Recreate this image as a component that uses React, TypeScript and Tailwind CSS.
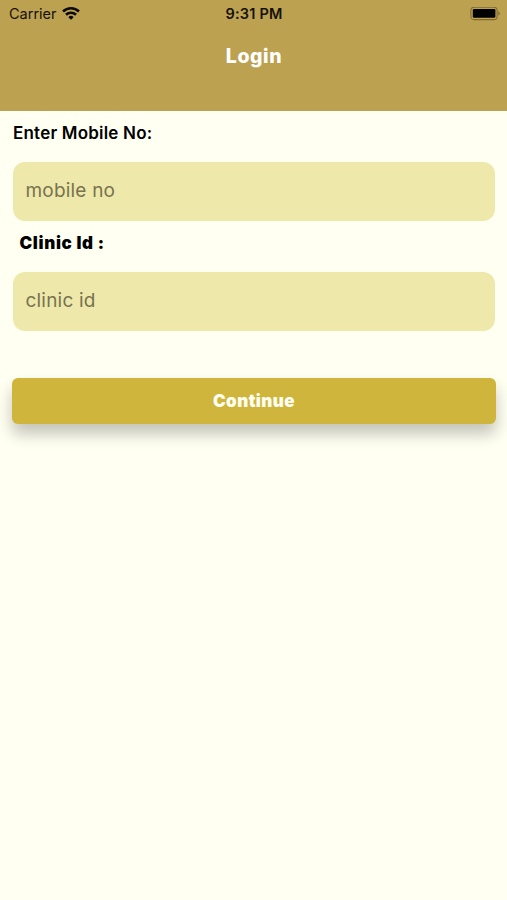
import React from "react";

function WifiIcon() {
  return (
    <svg className="ml-[5px] h-[14px] w-[18px]" viewBox="0 0 19 14" fill="none" stroke="#0c0a04" strokeWidth="2.7">
      <path d="M1.1 4.4a12 12 0 0 1 16.8 0" />
      <path d="M4.2 7.8a7.6 7.6 0 0 1 10.6 0" />
      <path d="M9.5 13.2 6.7 10.4a3.9 3.9 0 0 1 5.6 0z" fill="#0c0a04" stroke="none" />
    </svg>
  );
}

function BatteryIcon() {
  return (
    <svg className="h-[14px] w-[31px]" viewBox="0 0 31 14">
      <rect x="0.9" y="0.2" width="26.2" height="12.4" rx="3.2" fill="none" stroke="#806a31" strokeWidth="1.1" />
      <rect x="2.8" y="2" width="22.6" height="8.8" rx="1.3" fill="#000" />
      <path d="M28.3 4.2c1.9.6 1.9 3.8 0 4.4z" fill="#806a31" />
    </svg>
  );
}

function StatusBar() {
  return (
    <div className="grid h-[27px] grid-cols-[1fr_auto_1fr] items-center text-[14.5px] leading-[27px] text-[#15110a]">
      <div className="flex items-center pl-[9px]">
        <span>Carrier</span>
        <WifiIcon />
      </div>
      <span className="pl-[1px] font-semibold tracking-[0.2px]">9:31 PM</span>
      <div className="flex justify-end pr-[6px]">
        <BatteryIcon />
      </div>
    </div>
  );
}

function Field({ placeholder }: { placeholder: string }) {
  return (
    <input
      placeholder={placeholder}
      className="block h-[58.5px] w-full rounded-[12px] bg-[#eee8aa] px-[12.5px] pb-px text-[19px] tracking-[0.2px] text-black outline-none placeholder:text-[#77734f]"
    />
  );
}

export default function App() {
  return (
    <div className="flex h-[900px] w-full flex-col overflow-hidden bg-[#fffff2] font-['Inter',sans-serif]">
      <header className="h-[110.5px] bg-[#bca151]">
        <StatusBar />
        <h1 className="mt-[15px] pl-[1px] text-center text-[19.5px] font-extrabold leading-[28px] tracking-[0.6px] text-white">Login</h1>
      </header>
      <main className="pl-[13px] pr-[12px]">
        <div className="h-[51.5px] pt-[10.5px] text-[17px] font-semibold leading-[24px] tracking-[0.2px] text-black">Enter Mobile No:</div>
        <Field placeholder="mobile no" />
        <div className="h-[51.5px] pl-[6.5px] pt-[10.5px] text-[17px] font-black leading-[24px] tracking-[0.65px] text-black">Clinic Id :</div>
        <Field placeholder="clinic id" />
        <button className="-ml-[1px] mt-[47.5px] block h-[46px] w-[484px] rounded-[6px] bg-[#cfb53b] pt-[1px] text-[17px] font-black tracking-[0.45px] text-[#fffff2] shadow-[0_10px_16px_rgba(0,0,0,0.24)]">
          Continue
        </button>
      </main>
    </div>
  );
}
